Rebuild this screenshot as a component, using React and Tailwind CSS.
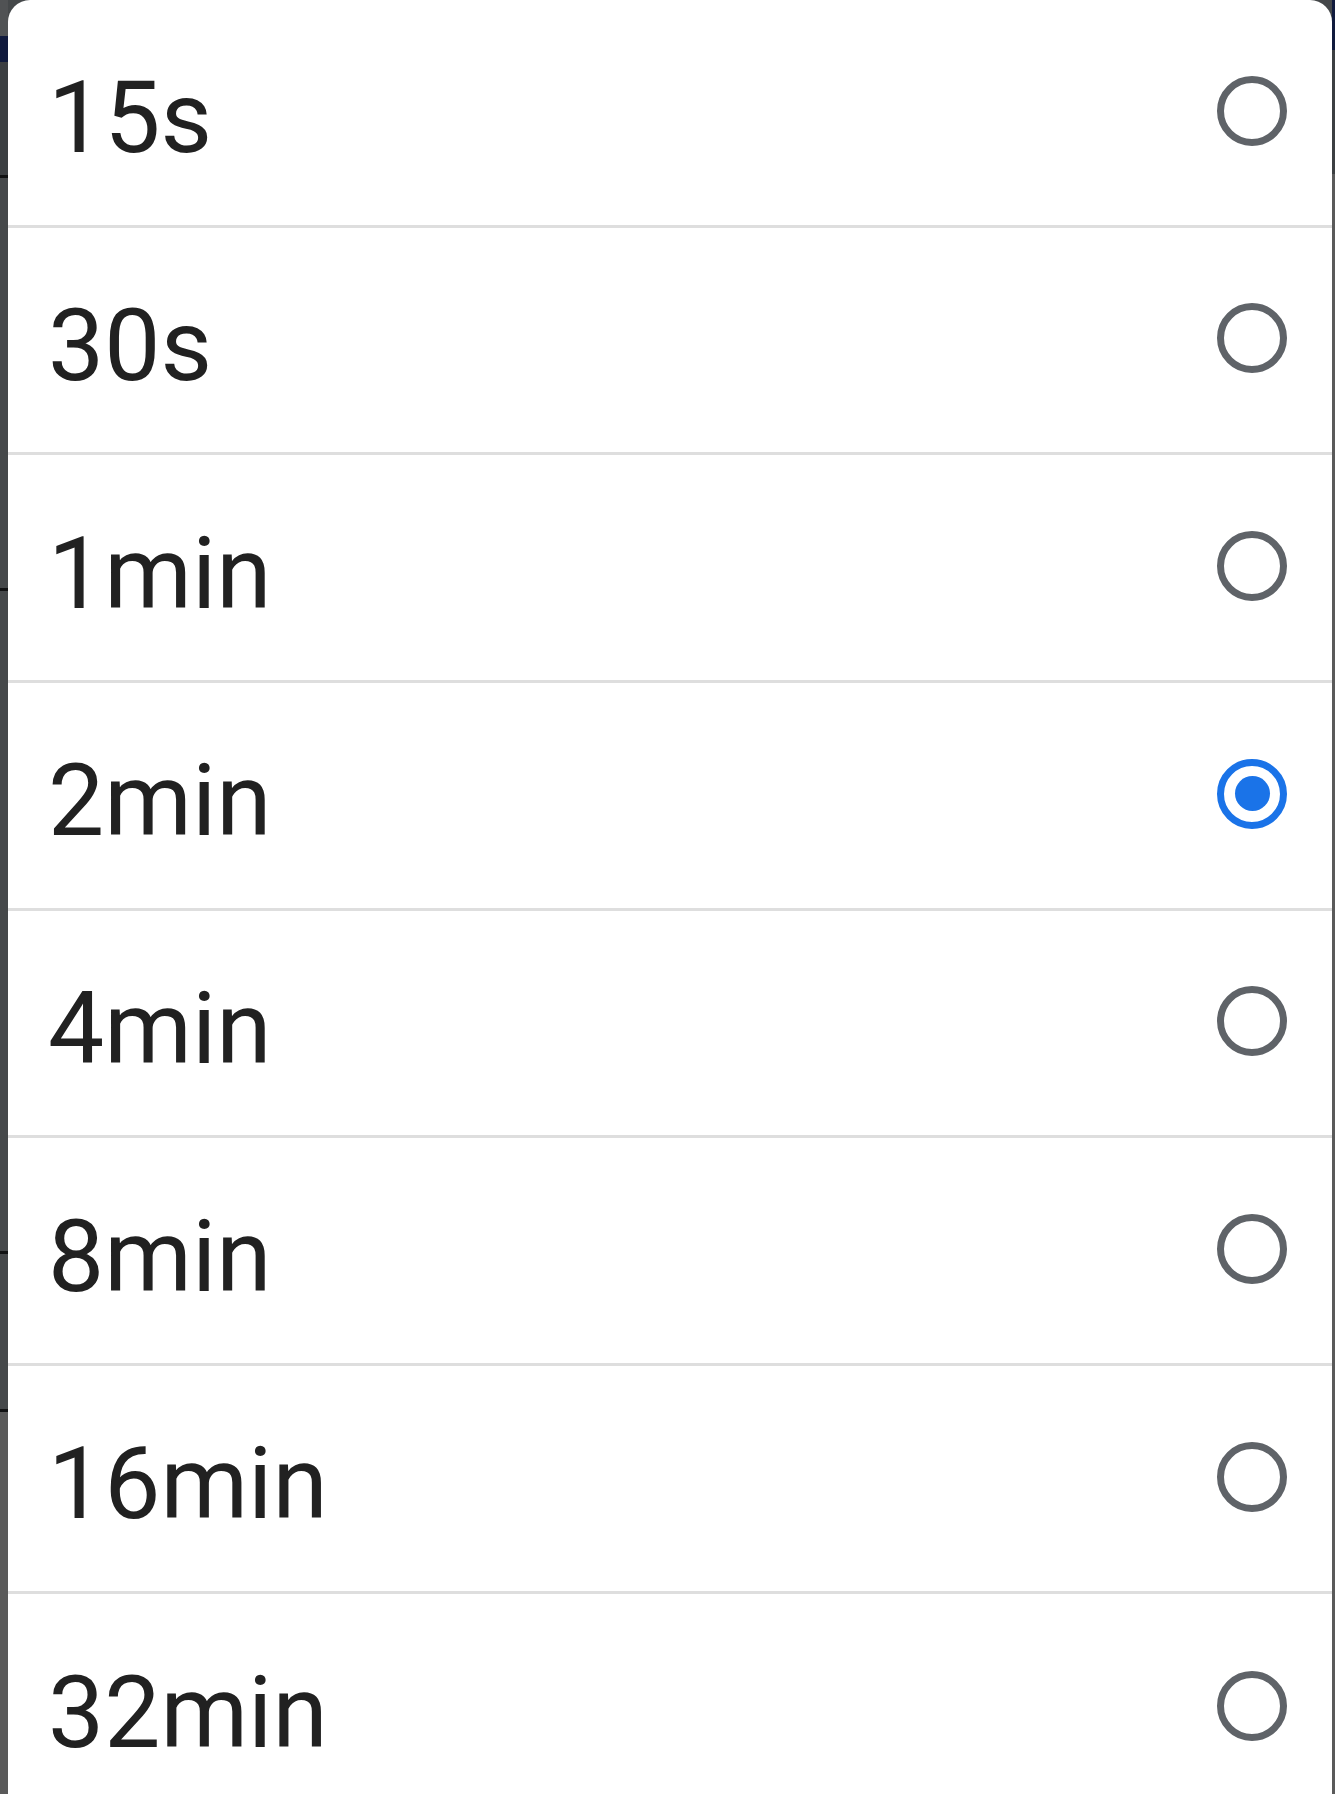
import React, { useState } from 'react'

const options = ['15s', '30s', '1min', '2min', '4min', '8min', '16min', '32min']

function Radio({ checked }) {
  return (
    <span
      className={`flex h-[70px] w-[70px] shrink-0 items-center justify-center rounded-full border-[7px] ${
        checked ? 'border-[#1a73e8]' : 'border-[#5f6368]'
      }`}
    >
      {checked && <span className="h-[35px] w-[35px] rounded-full bg-[#1a73e8]" />}
    </span>
  )
}

export default function App() {
  const [selected, setSelected] = useState('2min')

  return (
    <div className="flex h-[1794px] w-full overflow-hidden bg-[#45484a]">
      {/* dimmed page behind the sheet, left edge */}
      <div className="flex w-[8px] shrink-0 flex-col">
        <div className="h-[36px] bg-[#505254]" />
        <div className="h-[26px] bg-[#101a3d]" />
        <div className="h-[113px] bg-[#3c3f42]" />
        <div className="h-[3px] bg-[#111213]" />
        <div className="h-[410px] bg-[#45484a]" />
        <div className="h-[3px] bg-[#111213]" />
        <div className="h-[660px] bg-[#45484a]" />
        <div className="h-[3px] bg-[#111213]" />
        <div className="h-[155px] bg-[#45484a]" />
        <div className="h-[3px] bg-[#111213]" />
        <div className="flex-1 bg-[#5a5a5a]" />
      </div>

      <div
        className="flex flex-1 flex-col overflow-hidden rounded-t-[22px] bg-white"
        role="dialog"
        aria-modal="true"
      >
        {options.map((opt, i) => (
          <button
            key={opt}
            type="button"
            onClick={() => setSelected(opt)}
            className={`flex h-[227.67px] shrink-0 items-center justify-between pl-[40px] pr-[45px] text-left ${
              i < options.length - 1 ? 'border-b-[3px] border-[#dedede]' : ''
            }`}
          >
            <span className="pt-[12px] font-['Roboto',sans-serif] text-[100px] leading-none text-[#212121]">
              {opt}
            </span>
            <span className="-mt-[3px]">
              <Radio checked={selected === opt} />
            </span>
          </button>
        ))}
      </div>

      {/* right edge */}
      <div className="flex w-[3px] shrink-0 flex-col">
        <div className="h-[50px] bg-[#101a3d]" />
        <div className="h-[124px] bg-[#3c3f42]" />
        <div className="flex-1 bg-[#5a5a5a]" />
      </div>
    </div>
  )
}
